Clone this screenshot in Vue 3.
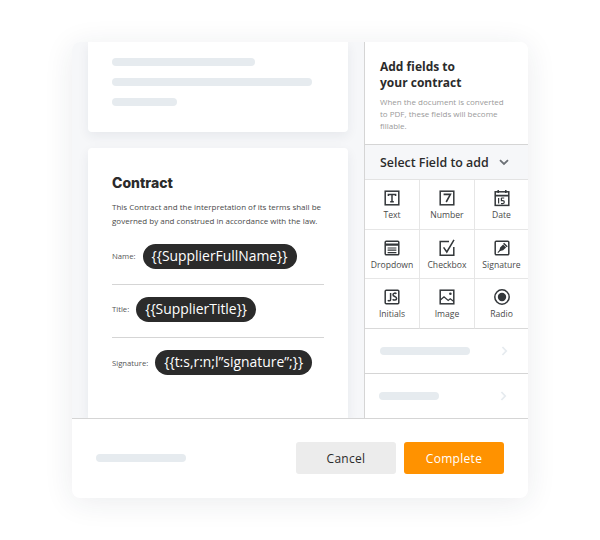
<script setup>
const fields = [
  { id: 'text', label: 'Text' },
  { id: 'number', label: 'Number' },
  { id: 'date', label: 'Date' },
  { id: 'dropdown', label: 'Dropdown' },
  { id: 'checkbox', label: 'Checkbox' },
  { id: 'signature', label: 'Signature' },
  { id: 'initials', label: 'Initials' },
  { id: 'image', label: 'Image' },
  { id: 'radio', label: 'Radio' },
]
const rows = [
  { label: 'Name:', tag: '{{SupplierFullName}}' },
  { label: 'Title:', tag: '{{SupplierTitle}}' },
  { label: 'Signature:', tag: '{{t:s,r:n;l”signature”;}}' },
]
</script>

<template>
  <div class="page">
    <div class="card">
      <div class="main">
        <div class="docs">
          <div class="doc top">
            <span class="bar b1"></span>
            <span class="bar b2"></span>
            <span class="bar b3"></span>
          </div>
          <div class="doc contract">
            <h2>Contract</h2>
            <p class="intro">This Contract and the interpretation of its terms shall be governed by and construed in accordance with the law.</p>
            <div v-for="(r, i) in rows" :key="r.label" class="line" :class="{ last: i === 2 }">
              <span class="lbl">{{ r.label }}</span>
              <span class="tag">{{ r.tag }}</span>
            </div>
          </div>
        </div>
        <aside class="side">
          <div class="head">
            <h3>Add fields to<br />your contract</h3>
            <p>When the document is converted to PDF, these fields will become fillable.</p>
          </div>
          <div class="select">
            <span>Select Field to add</span>
            <svg width="10" height="7" viewBox="0 0 10 7"><path d="M1 1.2 5 5l4-3.8" fill="none" stroke="#6b7075" stroke-width="1.8" /></svg>
          </div>
          <div class="grid">
            <div v-for="f in fields" :key="f.id" class="cell">
              <svg class="ico" width="18" height="18" viewBox="0 0 18 18" fill="none" stroke="#33373a" stroke-width="1.5">
                <template v-if="f.id === 'text'">
                  <rect x="2.2" y="2.2" width="13.6" height="13.6" />
                  <path d="M5.4 7V5.4h7.2V7M9 5.4v7.4M7.2 12.8h3.6" />
                </template>
                <template v-else-if="f.id === 'number'">
                  <rect x="2.2" y="2.2" width="13.6" height="13.6" />
                  <path d="M5.6 5.4h6.8L8.2 13" stroke-width="1.6" />
                </template>
                <template v-else-if="f.id === 'date'">
                  <rect x="2.2" y="2.8" width="13.6" height="13.6" />
                  <path d="M2.2 6.6h13.6" stroke-width="1.8" />
                  <path d="M5.2 1v3M12.8 1v3" />
                  <path d="M5.6 9v5.6M8.2 9h3M8.4 9v2.6h1.4a1.5 1.5 0 0 1 0 3H8" stroke-width="1.2" />
                </template>
                <template v-else-if="f.id === 'dropdown'">
                  <rect x="2.2" y="2.2" width="13.6" height="13.6" rx="1" />
                  <path d="M2.2 5.6h13.6" stroke-width="2.4" />
                  <path d="M4.6 9h8.8M4.6 11.2h8.8M4.6 13.6h8.8" stroke-width="1.2" />
                </template>
                <template v-else-if="f.id === 'checkbox'">
                  <path d="M11 2.6H2.2v13.6h13.6V8" />
                  <path d="M5.6 8.4 8.8 13 16 .8" />
                </template>
                <template v-else-if="f.id === 'signature'">
                  <rect x="2.2" y="2.2" width="13.6" height="13.6" rx="1" />
                  <path d="m6.2 12.2.9-3.8 3-3 3 3-3 2.9z" fill="#33373a" stroke="none" />
                  <path d="m10.6 4.2 3.6 3.6" />
                  <path d="M4.8 13.6 7.8 10.6" stroke-width="1.1" />
                </template>
                <template v-else-if="f.id === 'initials'">
                  <rect x="2.2" y="2.2" width="13.6" height="13.6" rx="1" />
                  <path d="M7.6 5v6.4c0 1.6-1.8 1.8-2.8.8" />
                  <path d="M13.4 5.8c-.8-1-3.4-1-3.4.9 0 2.1 3.6 1.5 3.6 3.7 0 2-3 2.1-3.9.8" />
                </template>
                <template v-else-if="f.id === 'image'">
                  <rect x="2.2" y="2.2" width="13.6" height="13.6" />
                  <path d="m2.4 12 3.6-3.2 4.2 3.6 2-1.6 3.6 2.8" stroke-width="1.3" />
                  <circle cx="12.4" cy="5.8" r="1.3" fill="#33373a" stroke="none" />
                </template>
                <template v-else>
                  <circle cx="9" cy="9" r="7.2" />
                  <circle cx="9" cy="9" r="4.2" fill="#33373a" stroke="none" />
                </template>
              </svg>
              <span>{{ f.label }}</span>
            </div>
          </div>
          <div class="more">
            <span class="bar m1"></span>
            <svg width="7" height="10" viewBox="0 0 7 10"><path d="m1.4 1 3.8 4-3.8 4" fill="none" stroke="#e6ebef" stroke-width="1.8" /></svg>
          </div>
          <div class="more">
            <span class="bar m2"></span>
            <svg width="7" height="10" viewBox="0 0 7 10"><path d="m1.4 1 3.8 4-3.8 4" fill="none" stroke="#e6ebef" stroke-width="1.8" /></svg>
          </div>
        </aside>
      </div>
      <footer class="foot">
        <span class="bar f1"></span>
        <div class="btns">
          <button class="btn cancel">Cancel</button>
          <button class="btn complete">Complete</button>
        </div>
      </footer>
    </div>
  </div>
</template>

<style scoped>
.page {
  width: 600px;
  height: 540px;
  padding: 42px 72px;
  box-sizing: border-box;
  font-family: "Open Sans", sans-serif;
  background: #fff;
}
.card {
  width: 456px;
  height: 456px;
  border-radius: 8px;
  background: #fff;
  box-shadow: 0 4px 30px rgba(30, 45, 70, 0.09);
  overflow: hidden;
  display: flex;
  flex-direction: column;
}
.main {
  display: flex;
  height: 376px;
}
.docs {
  width: 292px;
  height: 376px;
  box-sizing: border-box;
  padding: 0 16px;
  background: #f6f7f9;
  display: flex;
  flex-direction: column;
  gap: 16px;
  overflow: hidden;
}
.doc {
  background: #fff;
  box-shadow: 0 4px 12px rgba(30, 45, 70, 0.07);
}
.top {
  height: 90px;
  flex: none;
  border-radius: 0 0 4px 4px;
  padding: 16px 24px 0;
  box-sizing: border-box;
  display: flex;
  flex-direction: column;
  gap: 12px;
}
.bar {
  display: block;
  height: 8px;
  border-radius: 4px;
  background: #e6ebef;
}
.b1 { width: 143px; }
.b2 { width: 200px; }
.b3 { width: 65px; }
.contract {
  flex: 1;
  border-radius: 4px 4px 0 0;
  padding: 26px 24px 0;
}
h2 {
  margin: 0;
  font: 800 14px/17px Inter, sans-serif;
  color: #2b2b2b;
}
.intro {
  margin: 9px 0 0;
  font-size: 8px;
  line-height: 14px;
  color: #4a4a4a;
  width: 212px;
}
.line {
  display: flex;
  align-items: center;
  gap: 7px;
  width: 212px;
  height: 53px;
  box-sizing: border-box;
  padding-bottom: 4px;
  border-bottom: 1px solid #d5d5d5;
}
.intro + .line {
  height: 57px;
  padding-top: 4px;
}
.line.last {
  border-bottom: 0;
}
.lbl {
  font-size: 7.7px;
  color: #555;
}
.tag {
  height: 25px;
  padding: 0 9px;
  border-radius: 13px;
  background: #2b2b2b;
  color: #fff;
  font-size: 13.9px;
  line-height: 24px;
  white-space: nowrap;
}
.side {
  width: 164px;
  flex: none;
  box-sizing: border-box;
  border-left: 1px solid #d5d5d5;
  background: #fff;
}
.head {
  height: 102px;
  box-sizing: border-box;
  padding: 17px 15px 0;
}
h3 {
  margin: 0;
  font-size: 12px;
  font-weight: 700;
  line-height: 16px;
  color: #2b2b2b;
}
.head p {
  margin: 5px 0 0;
  font-size: 8px;
  line-height: 12px;
  color: #9a9a9a;
}
.select {
  height: 36px;
  box-sizing: border-box;
  border-top: 1px solid #d5d5d5;
  border-bottom: 1px solid #e3e3e3;
  background: #f6f7f9;
  display: flex;
  align-items: center;
  padding: 0 15px;
  gap: 10px;
  font-size: 12.4px;
  font-weight: 600;
  color: #2b2b2b;
}
.grid {
  display: grid;
  grid-template-columns: 55px 55px 53px;
  grid-template-rows: 50px 49px 50px;
}
.cell {
  box-sizing: border-box;
  border-right: 1px solid #e6e6e6;
  border-bottom: 1px solid #e6e6e6;
  display: flex;
  flex-direction: column;
  align-items: center;
  padding-top: 9px;
  font-size: 8.6px;
  line-height: 12px;
  color: #4a4a4a;
}
.cell:nth-child(3n) {
  border-right: 0;
}
.cell:nth-child(n + 7) {
  border-bottom-color: #d9d9d9;
}
.ico {
  margin-bottom: 2px;
}
.more {
  height: 45px;
  box-sizing: border-box;
  border-bottom: 1px solid #d5d5d5;
  display: flex;
  align-items: center;
  justify-content: space-between;
  padding: 0 20px 0 15px;
}
.more:last-child {
  height: 44px;
  border-bottom: 0;
  padding-right: 21px;
  padding-left: 14px;
}
.m1 { width: 90px; }
.m2 { width: 60px; }
.foot {
  flex: 1;
  box-sizing: border-box;
  border-top: 1px solid #d5d5d5;
  display: flex;
  align-items: center;
  justify-content: space-between;
  padding: 0 24px 2px;
}
.f1 { width: 90px; }
.btns {
  display: flex;
  gap: 8px;
}
.btn {
  width: 100px;
  height: 32px;
  border: 0;
  border-radius: 3px;
  font-family: "Open Sans", sans-serif;
  font-size: 12px;
  letter-spacing: 0.3px;
  padding: 2px 0 0;
}
.cancel {
  background: #ececec;
  color: #2b2b2b;
}
.complete {
  background: #ff9200;
  color: #fff;
}
</style>
